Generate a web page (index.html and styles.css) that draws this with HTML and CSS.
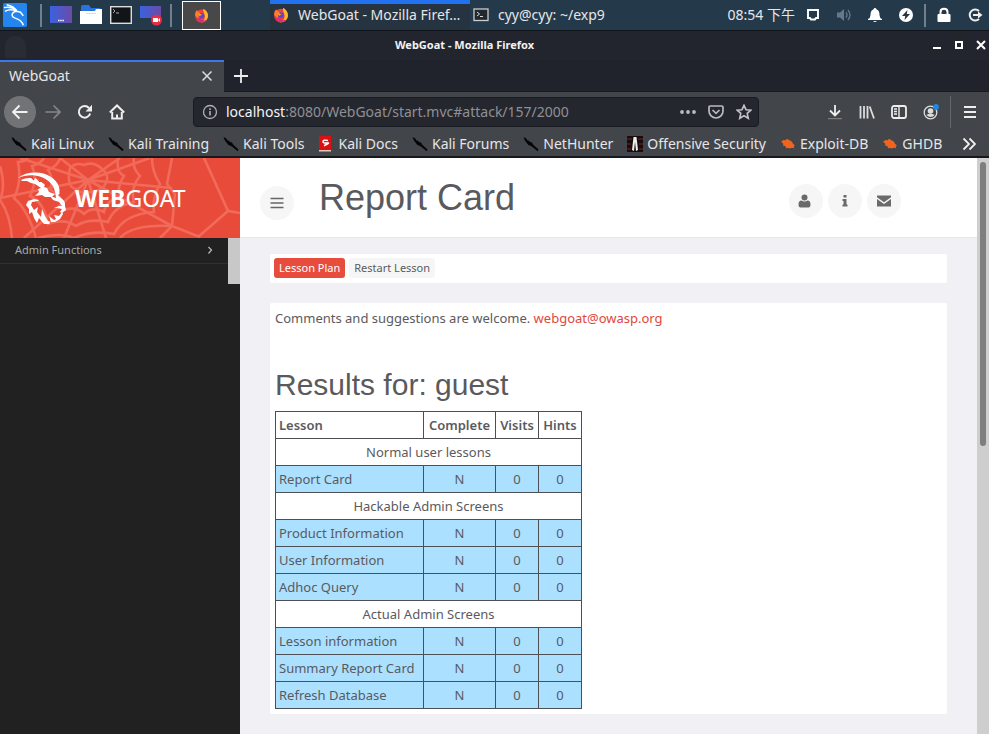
FILE: index.html
```html
<!DOCTYPE html>
<html lang="en">
<head>
<meta charset="utf-8">
<title>WebGoat</title>
<link rel="stylesheet" href="styles.css">
</head>
<body>
<svg class="defs" aria-hidden="true">
  <defs>
    <symbol id="fox" viewBox="0 0 16 16">
      <circle cx="8" cy="8.6" r="6.9" fill="#f0413f"/>
      <path d="M1.2 8C1 5 2 3.5 3.2 2.2c.2 1 .7 1.4 1.5 1.8L7 5.500 4.500 11z" fill="#ff7a2a"/>
      <path d="M10 .8c3.500 2 5.600 5 4.800 9-1 4-5 6-8.500 5.200C11 14 12 11 11.500 8 11 5 9.500 4 10 .8z" fill="#ffb72d"/>
      <path d="M2 11c2 4.500 8.500 5.500 11.500 1.500-2 1-5 1-7-1z" fill="#e02878"/>
      <circle cx="8" cy="8.200" r="3" fill="#6244c8"/>
      <path d="M4.200 6.500c2-1 3 .3 4.500.5-1 1.200-2 1-2.500 2z" fill="#ff9a2a"/>
    </symbol>
    <symbol id="knife" viewBox="0 0 16 16">
      <path d="M.5 1 3 2.300l1.500 2.200 1.500.3 1 1.200 2 .6 1 1.800 5.500 5.200-.8 1.600-5.500-4.400-2.200-1.400-1.600-.4-2-2.600-1.600-2.200z" fill="#050505"/>
    </symbol>
    <symbol id="bug" viewBox="0 0 14 14">
      <path d="M1 5l2-1.500 2 .3L6 2.500l2 1 2.500 1.500 1 2 1.500 1-1 1.300.5 1.500-2-.5-2 .7-1-.5-2 .3-1-2-2-.5L3 7z" fill="#f0641e"/>
    </symbol>
  </defs>
</svg>

<header class="panel">
  <svg class="kali" viewBox="0 0 26 26"><rect width="26" height="26" rx="2" fill="#2485ee"/><path d="M1 5c5-1 10 0 14 3M2 9c4-2 9-2 13 0M4 2c5 1 9 3 11 7-3 0-6 2-5 5 1 4 9 1 12 10M15 9l4 1 3 4" fill="none" stroke="#fff" stroke-width="1.600"/></svg>
  <span class="bar"></span>
  <svg class="launch" viewBox="0 0 22 22"><defs><linearGradient id="desk"><stop offset="0" stop-color="#3a62e0"/><stop offset="1" stop-color="#6b4ba6"/></linearGradient></defs><rect y="2" width="22" height="17" fill="url(#desk)"/><path d="M8 16.500h6" stroke="#fff" stroke-width="1.500" stroke-dasharray="1.500 .7"/></svg>
  <svg class="launch" viewBox="0 0 22 22"><path d="M1 3q0-2 2-2h6l2 3h8q2 0 2 2v5H1z" fill="#2874dc"/><path d="M0 7h15l1-2h6v15H0z" fill="#fff"/><path d="M6 9.500h10" stroke="#ddd"/></svg>
  <svg class="launch" viewBox="0 0 22 22"><rect x=".7" y="2.700" width="20.600" height="16.600" fill="#111418" stroke="#ddd" stroke-width="1.400"/><path d="M3 5l2 2-2 2M6 9h3" fill="none" stroke="#aaa"/></svg>
  <svg class="launch" viewBox="0 0 22 22"><rect y="2" width="21" height="12" fill="url(#desk)"/><circle cx="16.500" cy="16" r="5.500" fill="#e52e42"/><path d="M13 14h5v4h-5zM18 16l2-2v4z" fill="#fff"/></svg>
  <span class="bar"></span>
  <button class="pager" aria-label="Workspace"><svg viewBox="0 0 16 16"><use href="#fox"/></svg></button>
  <button class="task active"><svg viewBox="0 0 16 16"><use href="#fox"/></svg><span>WebGoat - Mozilla Firef…</span></button>
  <button class="task"><svg viewBox="0 0 16 16"><rect x="1" y="2" width="14" height="11.500" fill="#202830" stroke="#ccc" stroke-width="1.300"/><path d="M4 5l2.500 2L4 9M7 9.500h3" fill="none" stroke="#ddd"/></svg><span>cyy@cyy: ~/exp9</span></button>
  <div class="tray">
    <time>08:54 下午</time>
    <svg viewBox="0 0 16 16"><path d="M3 3h10v8h-2l-1 1.500H6L5 11H3z" fill="none" stroke="#fff" stroke-width="1.900"/></svg>
    <svg viewBox="0 0 16 16"><path d="M1 5.500h3L8 2v12l-4-3.500H1z" fill="#66788a"/><path d="M10 5.500q2 2.500 0 5M12 3q4 5 0 10" fill="none" stroke="#66788a" stroke-width="1.300"/></svg>
    <svg viewBox="0 0 16 16"><path d="M8 1q1.200 0 1.400 1.300C12 3.200 12.500 5.500 12.500 8q0 3 2.500 4v1H1v-1q2.500-1 2.500-4c0-2.500.5-4.800 3.100-5.700Q6.800 1 8 1zM6 14h4q-2 2-4 0z" fill="#fff"/></svg>
    <svg viewBox="0 0 16 16"><circle cx="8" cy="8" r="7" fill="#fff"/><path d="M9.500 3L4 9h3.200L6.500 13 12 7H8.800z" fill="#243746"/></svg>
    <span class="bar"></span>
    <svg viewBox="0 0 16 16"><path d="M4.500 8V5q0-3.300 3.500-3.300T11.500 5v3" fill="none" stroke="#fff" stroke-width="2"/><rect x="1.500" y="7" width="13" height="8" rx="1" fill="#fff"/></svg>
    <svg viewBox="0 0 16 16"><path d="M12 4A5.500 5.500 0 1 0 12 12" fill="none" stroke="#eee" stroke-width="2"/><path d="M6 8h6" stroke="#eee" stroke-width="2"/><path d="M11 4.500L15.500 8 11 11.500z" fill="#eee"/></svg>
  </div>
</header>

<div class="titlebar">
  <span class="appicon"></span>
  <span class="title">WebGoat - Mozilla Firefox</span>
  <div class="winbtns">
    <button aria-label="Minimize"><svg viewBox="0 0 10 10"><path d="M1 8h8" stroke="#fff" stroke-width="2"/></svg></button>
    <button aria-label="Maximize"><svg viewBox="0 0 10 10"><rect x="2" y="2" width="6" height="6" fill="none" stroke="#fff" stroke-width="2"/></svg></button>
    <button aria-label="Close"><svg viewBox="0 0 10 10"><path d="M1 1l8 8M9 1L1 9" stroke="#fff" stroke-width="2"/></svg></button>
  </div>
</div>

<div class="tabs">
  <div class="tab"><span>WebGoat</span><button aria-label="Close tab"><svg viewBox="0 0 12 12"><path d="M1.500 1.500l9 9M10.500 1.500l-9 9" stroke="#ddd" stroke-width="1.500"/></svg></button></div>
  <button class="newtab" aria-label="New tab"><svg viewBox="0 0 14 14"><path d="M7 0v14M0 7h14" stroke="#eee" stroke-width="1.800"/></svg></button>
</div>

<nav class="toolbar">
  <button class="back" aria-label="Back"><svg viewBox="0 0 16 16"><path d="M15.500 8H1M7.500 1.500L1 8l6.500 6.500" fill="none" stroke="#f2f2f2" stroke-width="1.900"/></svg></button>
  <button aria-label="Forward"><svg viewBox="0 0 16 16"><path d="M.5 8H15M8.500 1.500L15 8l-6.500 6.500" fill="none" stroke="#85868a" stroke-width="1.700"/></svg></button>
  <button aria-label="Reload"><svg viewBox="0 0 16 16"><path d="M13.200 9.500A5.800 5.800 0 1 1 12 4" fill="none" stroke="#eee" stroke-width="2"/><path d="M15 .8v6.700H8.500z" fill="#eee"/></svg></button>
  <button aria-label="Home"><svg viewBox="0 0 16 16"><path d="M.8 8.500L8 1.500l7.200 7" fill="none" stroke="#eee" stroke-width="2"/><path d="M3.200 8v6.500h9.600V8M8 14v-3.500" fill="none" stroke="#eee" stroke-width="2"/></svg></button>
  <div class="urlbar">
    <svg viewBox="0 0 16 16"><circle cx="8" cy="8" r="6.500" fill="none" stroke="#b1b1b5" stroke-width="1.300"/><path d="M8 7v4.500M8 4.200V6" stroke="#b1b1b5" stroke-width="1.600"/></svg>
    <a class="url" href="#attack/157/2000"><b>localhost</b>:8080/WebGoat/start.mvc#attack/157/2000</a>
    <svg viewBox="0 0 16 16"><g fill="#b9bbc0"><circle cx="2" cy="8" r="1.900"/><circle cx="8" cy="8" r="1.900"/><circle cx="14" cy="8" r="1.900"/></g></svg>
    <svg viewBox="0 0 16 16"><path d="M2.200 2h11.600q1.200 0 1.200 1.200V7a7 7 0 0 1-14 0V3.200Q1 2 2.200 2zM4.500 6L8 9.300 11.500 6" fill="none" stroke="#b9bbc0" stroke-width="1.700"/></svg>
    <svg viewBox="0 0 16 16"><path d="M8 1.300l2 4.400 4.900.5-3.700 3.200 1.100 4.900L8 11.800l-4.300 2.500 1.100-4.900L1.100 6.200 6 5.700z" fill="none" stroke="#c2c3c8" stroke-width="1.600"/></svg>
  </div>
  <div class="tools">
    <button aria-label="Downloads"><svg viewBox="0 0 16 16"><path d="M8 1v10.500M3 6.500l5 5 5-5" fill="none" stroke="#eee" stroke-width="1.800"/><path d="M1 14.700h14" stroke="#888"/></svg></button>
    <button aria-label="Library"><svg viewBox="0 0 16 16"><path d="M1.500 2v12.500M5 2v12.500M8.500 2v12.500M10.700 2.500l4.300 12" stroke="#ddd" stroke-width="1.800"/></svg></button>
    <button aria-label="Sidebar"><svg viewBox="0 0 16 16"><rect x="1" y="2" width="14" height="12" rx="2" fill="none" stroke="#eee" stroke-width="1.800"/><path d="M8 2v12M3 5h3M3 7.500h3M3 10h3" stroke="#eee" stroke-width="1.400"/></svg></button>
    <button aria-label="Account"><svg viewBox="0 0 16 16"><circle cx="7.500" cy="8.500" r="6.300" fill="none" stroke="#ddd" stroke-width="1.300"/><circle cx="7.500" cy="7" r="2.800" fill="#ddd"/><path d="M3.300 11q4.200-2.500 8.400 0-3.800 4-8.400 0z" fill="#ddd"/><circle cx="13" cy="3" r="2.900" fill="#1e88e5"/></svg></button>
    <span class="divider"></span>
    <button aria-label="Menu"><svg viewBox="0 0 16 16"><path d="M2 3h12M2 8h12M2 13h12" stroke="#eee" stroke-width="1.900"/></svg></button>
  </div>
</nav>

<nav class="bookmarks">
  <a href="#"><svg viewBox="0 0 16 16"><use href="#knife"/></svg>Kali Linux</a>
  <a href="#"><svg viewBox="0 0 16 16"><use href="#knife"/></svg>Kali Training</a>
  <a href="#"><svg viewBox="0 0 16 16"><use href="#knife"/></svg>Kali Tools</a>
  <a href="#"><svg viewBox="0 0 16 16"><rect x="1" width="12" height="14" fill="#dc1010"/><path d="M1 14h12v1.500H1z" fill="#e0c8b8"/><path d="M10 4.500Q5 3.500 5 5.500t4 1.500-3 2.700" fill="none" stroke="#fff" stroke-width="1.500"/></svg>Kali Docs</a>
  <a href="#"><svg viewBox="0 0 16 16"><use href="#knife"/></svg>Kali Forums</a>
  <a href="#"><svg viewBox="0 0 16 16"><use href="#knife"/></svg>NetHunter</a>
  <a href="#"><svg viewBox="0 0 16 16"><rect width="16" height="16" fill="#180c0c"/><path d="M0 3h5M11 3h5M0 8h4M12 8h4M0 13h4M12 13h4" stroke="#6b2a25"/><path d="M6.500 1h3l1.500 13-2 1-1-9-1 9-2-1z" fill="#eee"/></svg>Offensive Security</a>
  <a href="#"><svg viewBox="0 0 14 14"><use href="#bug"/></svg>Exploit-DB</a>
  <a href="#"><svg viewBox="0 0 14 14"><use href="#bug"/></svg>GHDB</a>
  <button class="more" aria-label="More bookmarks"><svg viewBox="0 0 14 14"><path d="M1.500 1.500L7 7l-5.500 5.500M7.500 1.500L13 7l-5.500 5.500" fill="none" stroke="#eee" stroke-width="1.800"/></svg></button>
</nav>

<div class="app">
  <aside class="sidebar">
    <div class="brand">
      <svg class="web" viewBox="0 0 240 80" preserveAspectRatio="xMidYMid slice"><g fill="none" stroke="#f26a59" stroke-width="2.600">
        <path d="M88 22L20 0M88 22L0 40M88 22L24 80M88 22L64 80M88 22l18 58M88 22l84 46 28 11M88 22l84 8M88 22L150 0M88 22L120 0M88 22L60 0M172 68l3-32-8-10 5-26M198 79l30-26 12 2M228 53L204 0M160 80l12-12"/>
        <path d="M60 0q-2 8-12 12 6 8 2 20 12 4 14 20 12-4 20 4 8-8 20-2 2-12 16-14-4-10 4-22-8-4-6-18"/>
        <path d="M44 0q-4 6-12 8 6 14-2 30 14 6 18 28 16-6 28 2 12-8 32-4 6-16 26-20-4-14 6-26-8-8-6-18"/>
        <path d="M28 0q-4 4-10 4 4 20-4 36 14 12 22 40M38 80q22-6 36 0M74 80q18-8 40-4 10-20 40-22-2-14 6-28-8-12-8-26M0 8q6 20 0 34 10 14 12 38M120 80q12-14 52-12"/>
        <path d="M70 10q6-6 14-3 10-4 18 4 8 6 4 14-4 8-12 8-12 4-18-2-10-2-6-21z"/>
      </g></svg>
      <svg class="goat" viewBox="0 0 50 52">
        <g fill="#fff">
          <path d="M0 6C9-1 24-1 33 5c6 4 10 10 8 17l-4-2C36 12 28 5 17 3.500 10 3 5 4 0 6z"/>
          <path d="M3 8c4-2 8-2 11-2l2 2 1-2 4 2v2l3 0 3 3-1 2 3 1 2 4 6 2-3 3-7 0-3-2-7 1 4-4-1-3 3-1-6-4-4-1-4-2-5 0z"/>
          <path d="M37 19l5 2-2 2c2 3 6 4 7 8l0 3 1 4-4 3-2-1 2-3-5-1-3 0 5-2 3 0-3-4-6-2-3-4 6 2z"/>
          <path d="M10 29l6-2 5 1-1 1-6 1-1 3 3 5 4-3-1 5 4 5 1-8 3 7 3 5 3 1-2-6 5 4 2-1-2-4 5 1 3-4 1 2-3 5-5 3-5 0-1 3-5-1-5-6-2 5-3-5-2-6-3 2 0-5-3-4z"/>
        </g>
        <path d="M13 5l3 3M18 5l3 4M23 7l2 4M27 10l1 4" stroke="#e94b3a" stroke-width="1.200"/>
      </svg>
      <span class="word"><b>WEB</b>GOAT</span>
    </div>
    <div class="menu">
      <a class="item" href="#"><span>Admin Functions</span><svg viewBox="0 0 8 8"><path d="M2.500 1l3 3-3 3.500" fill="none" stroke="#bbb" stroke-width="1.200"/></svg></a>
      <span class="thumb"></span>
    </div>
  </aside>
  <main class="content">
    <div class="head">
      <button class="round" aria-label="Toggle menu"><svg viewBox="0 0 14 14"><path d="M.5 2.500h13M.5 7h13M.5 11.500h13" stroke="#666" stroke-width="1.700"/></svg></button>
      <h1>Report Card</h1>
      <div class="actions">
        <button class="round" aria-label="User"><svg viewBox="0 0 14 14"><circle cx="5.500" cy="3.500" r="3" fill="#6a6a6a"/><path d="M-.5 10.500Q-.5 6.500 2.500 6.500q3 2 6 0 3 0 3 4 0 3-2 3h-8q-2 0-2-3z" fill="#6a6a6a"/></svg></button>
        <button class="round" aria-label="About"><svg viewBox="0 0 14 14"><path d="M5.500 1h3v2.500h-3zM4.500 5h4v5.500h1V12.500h-5v-2h1V7h-1z" fill="#6a6a6a"/></svg></button>
        <button class="round" aria-label="Contact"><svg viewBox="0 0 14 14"><path d="M0 1.500h14v1.800L7 8.300 0 3.300zM0 5l7 5 7-5v7.500H0z" fill="#6a6a6a"/></svg></button>
      </div>
    </div>
    <div class="body">
      <div class="card lessonbar"><button class="btn primary">Lesson Plan</button><button class="btn">Restart Lesson</button></div>
      <div class="card report">
        <p>Comments and suggestions are welcome. <a href="mailto:webgoat@owasp.org">webgoat@owasp.org</a></p>
        <h2>Results for: guest</h2>
        <table>
          <colgroup><col class="c-lesson"><col class="c-complete"><col class="c-count"><col class="c-count"></colgroup>
          <thead><tr><th>Lesson</th><th>Complete</th><th>Visits</th><th>Hints</th></tr></thead>
          <tbody>
            <tr><td colspan="4">Normal user lessons</td></tr>
            <tr class="row"><td>Report Card</td><td>N</td><td>0</td><td>0</td></tr>
            <tr><td colspan="4">Hackable Admin Screens</td></tr>
            <tr class="row"><td>Product Information</td><td>N</td><td>0</td><td>0</td></tr>
            <tr class="row"><td>User Information</td><td>N</td><td>0</td><td>0</td></tr>
            <tr class="row"><td>Adhoc Query</td><td>N</td><td>0</td><td>0</td></tr>
            <tr><td colspan="4">Actual Admin Screens</td></tr>
            <tr class="row"><td>Lesson information</td><td>N</td><td>0</td><td>0</td></tr>
            <tr class="row"><td>Summary Report Card</td><td>N</td><td>0</td><td>0</td></tr>
            <tr class="row"><td>Refresh Database</td><td>N</td><td>0</td><td>0</td></tr>
          </tbody>
        </table>
      </div>
    </div>
  </main>
  <div class="scroll"><span></span></div>
</div>
</body>
</html>
```
FILE: styles.css
```css
* { box-sizing: border-box; }
html, body { height: 100%; }
body {
  margin: 0;
  display: flex;
  flex-direction: column;
  overflow: hidden;
  font: 14px/20px "Noto Sans", "Noto Sans CJK SC", sans-serif;
  color: #e6e6e8;
  background: #f0f0f5;
}
button { border: 0; padding: 0; background: none; font: inherit; color: inherit; }
a { color: inherit; text-decoration: none; }
svg { display: block; flex: none; }
.defs { position: absolute; width: 0; height: 0; }

.panel {
  flex: none;
  height: 31px;
  display: flex;
  align-items: center;
  gap: 8px;
  padding-left: 3px;
  background: #243a4b;
  border-bottom: 1px solid #10151b;
}
.kali { width: 24px; height: 24px; }
.bar { width: 2px; height: 23px; background: #71808c; }
.kali + .bar { margin: 0 0 0 5px; }
.launch { width: 22px; height: 22px; }
.pager {
  width: 39px;
  height: 29px;
  margin-left: 2px;
  display: grid;
  place-items: center;
  border: 1px solid #fff;
  background: #484848;
}
.pager svg { width: 15px; height: 15px; }
.task { display: flex; align-items: center; gap: 9px; height: 30px; white-space: nowrap; }
.task svg { width: 16px; height: 16px; }
.task.active {
  width: 200px;
  margin-left: 41px;
  padding-left: 3px;
  background: #263340;
  box-shadow: inset 0 4px #2272f0;
}
.task:not(.active) { margin-left: -5px; }
.tray { margin-left: auto; display: flex; align-items: center; gap: 15px; padding-right: 6px; }
.tray svg { width: 16px; height: 16px; }
.tray time { margin-right: -5px; }
.tray .bar { margin: 0 -5px; }

.titlebar {
  flex: none;
  height: 29px;
  padding-bottom: 2px;
  display: grid;
  grid-template-columns: 1fr auto 1fr;
  align-items: center;
  background: #22252d;
}
.appicon { width: 21px; height: 22px; margin: 4px 0 0 5px; border-radius: 10px 10px 0 0; background: #292c33; }
.title { padding-right: 60px; font-size: 11px; font-weight: 700; color: #f2f2f2; }
.winbtns { justify-self: end; display: flex; gap: 12px; padding-right: 3px; }
.winbtns svg { width: 10px; height: 10px; }

.tabs { flex: none; height: 32px; display: flex; align-items: center; background: #20232b; border-bottom: 1px solid #181a20; }
.tab {
  width: 224px;
  height: 32px;
  padding: 0 11px 2px 9px;
  display: flex;
  align-items: center;
  justify-content: space-between;
  border-top: 2px solid #3d78e8;
  background: #42454a;
}
.tab svg { width: 12px; height: 12px; }
.newtab { margin-left: 10px; }
.newtab svg { width: 14px; height: 14px; }

.toolbar {
  flex: none;
  height: 40px;
  display: flex;
  align-items: center;
  gap: 16px;
  padding: 0 11px 0 4px;
  background: #42454a;
}
.toolbar svg { width: 16px; height: 16px; }
.back {
  width: 32px;
  height: 32px;
  margin-right: -7px;
  display: grid;
  place-items: center;
  border-radius: 50%;
  background: #727376;
}
.urlbar {
  flex: 1;
  height: 30px;
  margin: 0 52px 0 52px;
  padding: 0 6px 0 8px;
  display: flex;
  align-items: center;
  gap: 12px;
  border: 1px solid #191b22;
  border-radius: 4px;
  background: #25272f;
}
.url { flex: 1; margin-left: -4px; color: #8f9095; white-space: nowrap; }
.url b { font-weight: 400; color: #f4f4f6; }
.tools { display: flex; align-items: center; gap: 16px; }
.divider { width: 1px; height: 32px; margin: 0 -5px 0 -5px; background: #66686d; }

.bookmarks {
  flex: none;
  height: 26px;
  display: flex;
  align-items: center;
  gap: 14px;
  padding: 0 13px 1px 11px;
  border-bottom: 2px solid #16181d;
  background: #42454a;
}
.bookmarks a { display: flex; align-items: center; gap: 4px; white-space: nowrap; }
.bookmarks svg { width: 16px; height: 16px; }
.bookmarks .more { margin-left: auto; }
.bookmarks .more svg { width: 14px; height: 14px; }

.app { flex: 1; min-height: 0; display: flex; color: #5a5a5e; }
.sidebar { flex: none; width: 240px; display: flex; flex-direction: column; background: #212121; }
.brand {
  flex: none;
  position: relative;
  height: 80px;
  padding-left: 18px;
  display: flex;
  align-items: center;
  gap: 7px;
  background: #e94b3a;
}
.web { position: absolute; inset: 0; width: 100%; height: 100%; }
.goat { position: relative; width: 50px; height: 52px; }
.word { position: relative; font-size: 23px; line-height: 32px; color: #fff; }
.menu { display: flex; align-items: flex-start; }
.item {
  flex: 1;
  height: 26px;
  padding: 0 14px 2px 15px;
  display: flex;
  align-items: center;
  justify-content: space-between;
  border-bottom: 1px solid #303030;
  font-size: 11px;
  line-height: 18px;
  color: #aaa;
}
.item svg { width: 8px; height: 8px; }
.thumb { width: 12px; height: 46px; background: #c8c8c8; }

.content { flex: 1; min-width: 0; background: #f0f0f5; font-size: 13px; line-height: 20px; }
.head {
  height: 80px;
  display: flex;
  padding: 0 76px 0 20px;
  border-bottom: 1px solid #e8e8ea;
  background: #fff;
}
.round {
  width: 34px;
  height: 34px;
  display: grid;
  place-items: center;
  border-radius: 50%;
  background: #f6f6f6;
}
.round svg { width: 14px; height: 14px; overflow: visible; }
.head > .round { margin-top: 28px; }
h1, h2 { margin: 0; font-family: "Liberation Sans", sans-serif; font-weight: 400; }
h1 { margin: 20px 0 0 25px; font-size: 36px; line-height: 40px; }
.actions { margin: 26px 0 0 auto; display: flex; gap: 5px; }
.body { padding: 16px 30px 20px; display: grid; gap: 20px; }
.card { background: #fff; border-radius: 2px; }
.lessonbar { display: flex; gap: 4px; padding: 4px; height: 29px; }
.btn { height: 20px; padding: 0 5px; border-radius: 3px; background: #f6f6f6; font-size: 11px; line-height: 20px; }
.primary { background: #e74c3c; color: #fff; }
.report { padding: 5px; }
p { margin: 0; }
p a { color: #e0483c; }
h2 { margin: 40px 0 9px; font-size: 30px; line-height: 34px; }
table { border-collapse: collapse; }
.c-lesson { width: 148px; }
.c-complete { width: 72px; }
.c-count { width: 43px; }
th, td { height: 27px; padding: 3px; border: 1px solid #4c5054; text-align: center; }
th { font-weight: 600; }
th:first-child, .row td:first-child { text-align: left; }
.row { background: #ace0ff; }

.scroll { flex: none; width: 12px; padding: 4px 3px; background: #cecece; }
.scroll span { display: block; width: 6px; height: 50%; border-radius: 3px; background: #7e7e7e; }
```
